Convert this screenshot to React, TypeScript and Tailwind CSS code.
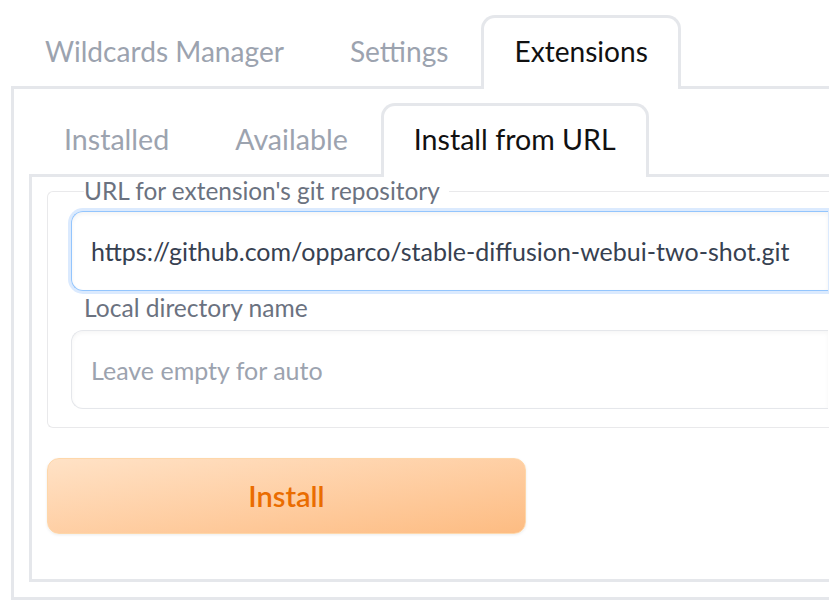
import { useState } from "react";

const topTabs = ["Wildcards Manager", "Settings", "Extensions"];
const subTabs = ["Installed", "Available", "Install from URL"];

function TabButton({
  label,
  active,
  size,
  onClick,
}: {
  label: string;
  active: boolean;
  size: string;
  onClick: () => void;
}) {
  return (
    <button
      onClick={onClick}
      className={`flex items-start pt-[12px] px-[30px] border-3 whitespace-nowrap rounded-t-[14px] ${size} ${
        active
          ? "h-[74px] border-b-0 border-[#e5e7eb] bg-white text-[#111111] relative z-10"
          : "h-[71px] border-transparent text-[#9ca3af]"
      }`}
    >
      {label}
    </button>
  );
}

export default function App() {
  const [tab, setTab] = useState("Extensions");
  const [sub, setSub] = useState("Install from URL");
  const [url, setUrl] = useState("https://github.com/opparco/stable-diffusion-webui-two-shot.git");
  const [dir, setDir] = useState("");

  return (
    <div className="w-[829px] h-[601px] overflow-hidden bg-white pt-[15px] font-['Lato',sans-serif]">
      {/* top tabs */}
      <div className="flex items-start h-[71px] pl-[12px]">
        {topTabs.map((t) => (
          <TabButton key={t} label={t} size="text-[28.1px]" active={tab === t} onClick={() => setTab(t)} />
        ))}
      </div>

      <div className="ml-[11px] w-[840px] border-3 border-r-0 border-[#e5e7eb] pl-[15px] pt-[14px] pb-[15px]">
        {/* sub tabs */}
        <div className="flex items-start h-[71px] pl-[2px]">
          {subTabs.map((t) => (
            <TabButton key={t} label={t} size="text-[28.6px]" active={sub === t} onClick={() => setSub(t)} />
          ))}
        </div>

        <div className="border-3 border-r-0 border-[#e5e7eb] pl-[15px] pb-[45px]">
          <fieldset className="border border-r-0 border-[#e9e9eb] rounded-l-[6px] px-[23px] pb-[18px]">
            <legend className="ml-[13px] pr-[9px] text-[24.4px] leading-[28px] text-[#6b7280]">
              URL for extension's git repository
            </legend>
            <input
              value={url}
              onChange={(e) => setUrl(e.target.value)}
              className="mt-[6px] block w-full h-[80px] rounded-l-[12px] border border-r-0 border-[#93c5fd] ring-3 ring-[#dbeafe] px-[19px] text-[25px] text-[#374151] outline-none shadow-[inset_0_2px_4px_rgba(0,0,0,0.05)]"
            />
            <label className="block mt-[3px] ml-[13px] text-[24.6px] leading-[28px] text-[#6b7280]">
              Local directory name
            </label>
            <input
              value={dir}
              onChange={(e) => setDir(e.target.value)}
              placeholder="Leave empty for auto"
              className="mt-[8px] block w-full h-[79px] rounded-l-[12px] border border-r-0 border-[#e5e7eb] px-[19px] text-[25px] text-[#374151] placeholder:text-[#9ca3af] outline-none shadow-[inset_0_2px_4px_rgba(0,0,0,0.04)]"
            />
          </fieldset>

          <button className="mt-[30px] w-[479px] h-[76px] rounded-[12px] border border-[#fed7aa] bg-gradient-to-br from-[#ffe2c6] to-[#fdbc82] text-[29px] font-semibold text-[#ea6c00] shadow-[0_1px_3px_rgba(0,0,0,0.08)]">
            Install
          </button>
        </div>
      </div>
    </div>
  );
}
